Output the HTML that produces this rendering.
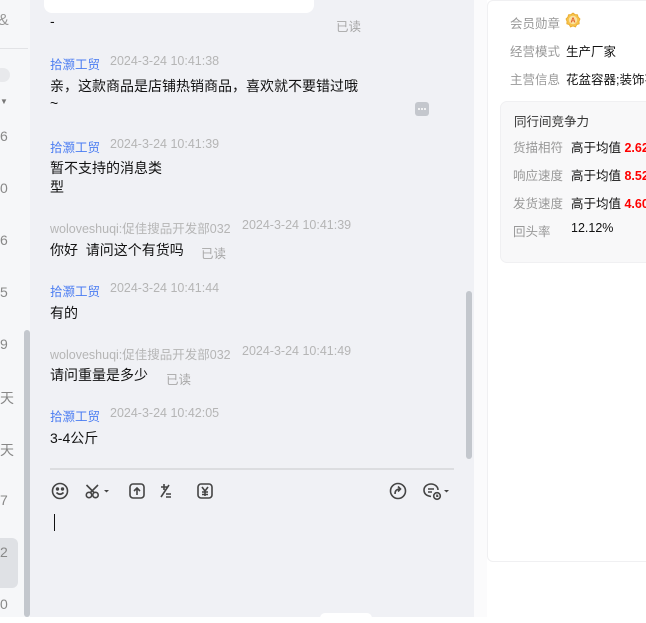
<!DOCTYPE html>
<html><head><meta charset="utf-8"><style>
*{margin:0;padding:0;box-sizing:border-box}
body{width:646px;height:617px;overflow:hidden;position:relative;background:#fff;font-family:"Liberation Sans","Noto Sans CJK SC",sans-serif;font-size:14px;color:#111}
.a{position:absolute;white-space:nowrap}
#left{position:absolute;left:0;top:0;width:30px;height:617px;background:#f6f7f9}
#chat{position:absolute;left:30px;top:0;width:444px;height:617px;background:#f0f1f5}
.n{color:#888;font-size:14px;left:0}
.nm{color:#4a7cf2;font-size:12.5px}
.tm{color:#b5b5b5;font-size:12.5px}
.gr{color:#a8a8a8;font-size:12.5px}
.lb{color:#999;font-size:12.5px}
.v{color:#111;font-size:12.5px}
.r{color:#f00;font-weight:bold;font-size:12.5px}
</style></head><body>
<div id="left">
 <div class="a" style="left:-2px;top:12px;color:#999;font-size:16px">&amp;</div>
 <div class="a" style="left:0;top:48px;width:28px;height:1px;background:#e2e3e6"></div>
 <div class="a" style="left:-6px;top:68px;width:16px;height:14px;border-radius:7px;background:#e8e9ec"></div>
 <div class="a" style="left:0;top:97px;color:#777;font-size:8px">▼</div>
 <div class="a n" style="top:128px">6</div>
 <div class="a n" style="top:180px">0</div>
 <div class="a n" style="top:232px">6</div>
 <div class="a n" style="top:284px">5</div>
 <div class="a n" style="top:336px">9</div>
 <div class="a n" style="top:388px">天</div>
 <div class="a n" style="top:440px">天</div>
 <div class="a n" style="top:492px">7</div>
 <div class="a" style="left:-6px;top:538px;width:24px;height:50px;border-radius:6px;background:#dfe1e5"></div>
 <div class="a n" style="top:544px">2</div>
 <div class="a n" style="top:596px">0</div>
 <div class="a" style="left:24px;top:330px;width:6px;height:287px;border-radius:3px;background:#c3c7cd"></div>
</div>
<div id="chat">
 <div class="a" style="left:14px;top:-8px;width:270px;height:21px;background:#fff;border-radius:0 0 8px 8px"></div>
 <div class="a" style="left:20px;top:13px">-</div>
 <div class="a gr" style="left:306px;top:16px">已读</div>

 <div class="a nm" style="left:20px;top:54px">拾灏工贸</div>
 <div class="a tm" style="left:80px;top:54px">2024-3-24 10:41:38</div>
 <div class="a" style="left:20px;top:76px">亲，这款商品是店铺热销商品，喜欢就不要错过哦</div>
 <div class="a" style="left:20px;top:95px">~</div>
 <div class="a" style="left:385px;top:102px;width:14px;height:14px;border-radius:3px;background:#c4c7cd"><svg width="14" height="14"><circle cx="4" cy="7" r="1" fill="#fff"/><circle cx="7" cy="7" r="1" fill="#fff"/><circle cx="10" cy="7" r="1" fill="#fff"/></svg></div>

 <div class="a nm" style="left:20px;top:137px">拾灏工贸</div>
 <div class="a tm" style="left:80px;top:137px">2024-3-24 10:41:39</div>
 <div class="a" style="left:20px;top:158px">暂不支持的消息类</div>
 <div class="a" style="left:20px;top:177px">型</div>

 <div class="a tm" style="left:20px;top:218px">woloveshuqi:促佳搜品开发部032</div>
 <div class="a tm" style="left:212px;top:218px">2024-3-24 10:41:39</div>
 <div class="a" style="left:20px;top:240px">你好&nbsp; 请问这个有货吗</div>
 <div class="a gr" style="left:171px;top:243px">已读</div>

 <div class="a nm" style="left:20px;top:281px">拾灏工贸</div>
 <div class="a tm" style="left:80px;top:281px">2024-3-24 10:41:44</div>
 <div class="a" style="left:20px;top:303px">有的</div>

 <div class="a tm" style="left:20px;top:344px">woloveshuqi:促佳搜品开发部032</div>
 <div class="a tm" style="left:212px;top:344px">2024-3-24 10:41:49</div>
 <div class="a" style="left:20px;top:365px">请问重量是多少</div>
 <div class="a gr" style="left:136px;top:369px">已读</div>

 <div class="a nm" style="left:20px;top:406px">拾灏工贸</div>
 <div class="a tm" style="left:80px;top:406px">2024-3-24 10:42:05</div>
 <div class="a" style="left:20px;top:428px">3-4公斤</div>

 <div class="a" style="left:436px;top:291px;width:6px;height:168px;border-radius:3px;background:#c3c7cd"></div>
 <div class="a" style="left:20px;top:468px;width:404px;height:2px;background:#dcdde0"></div>

 <svg class="a" style="left:20px;top:480px" width="400" height="22" viewBox="0 0 400 20" fill="none" stroke="#444" stroke-width="1.6">
  <circle cx="10" cy="10" r="7.5"/><circle cx="7.5" cy="8" r=".9" fill="#444"/><circle cx="12.5" cy="8" r=".9" fill="#444"/><path d="M6.5 11.5q3.5 3.5 7 0"/>
  <circle cx="39" cy="14" r="2.7"/><circle cx="45.5" cy="14" r="2.7"/><path d="M40 12l8-8M44.5 12l-8-8"/>
  <path d="M54 9l2.5 2.5 2.5-2.5z" fill="#444" stroke="none"/>
  <rect x="80" y="3" width="14" height="14" rx="3"/><path d="M87 14V7M84 10l3-3 3 3"/>
  <path d="M111 6h6M114 3v6M111 16l8-12M116 13h5M116 16h5"/>
  <rect x="148" y="3" width="14" height="14" rx="3"/><path d="M152 6l3 4 3-4M152 11h6M152 13.5h6M155 10v5"/>
  <circle cx="348" cy="10" r="7.5"/><path d="M345 13q0-5 5-5M348 5.5l2.5 2.5-2.5 2.5"/>
  <path d="M381 15.5q-7-1-7-6.5a7 6 0 0 1 14 0"/><path d="M378 8h6M378 11h4"/><circle cx="387" cy="15" r="3.3"/><path d="M387 13.5v1.7h1.3"/>
  <path d="M394 9l2.5 2.5 2.5-2.5z" fill="#444" stroke="none"/>
 </svg>
 <div class="a" style="left:24px;top:514px;width:1px;height:17px;background:#111"></div>
 <div class="a" style="left:290px;top:613px;width:52px;height:10px;border-radius:5px;background:#fff"></div>
</div>

<div class="a" style="left:474px;top:0;width:13px;height:617px;background:#fbfbfc"></div>
<div class="a" style="left:487px;top:0;width:170px;height:562px;background:#fff;border:1px solid #f0f0f2;border-radius:6px"></div>
<div class="a lb" style="left:510px;top:13px">会员勋章</div>
<svg class="a" style="left:565px;top:12px" width="16" height="16" viewBox="0 0 16 16"><path d="M8 1l2 1.5 2.5.3.7 2.4L15 7l-1 2.3.2 2.5-2.4.8L10.5 15 8 14l-2.5 1-1.3-2.4-2.4-.8.2-2.5L1 7l1.8-1.8.7-2.4L6 2.5z" fill="#f6c24a" stroke="#e9a92a" stroke-width=".8"/><circle cx="8" cy="8" r="4.2" fill="#fbe2a0"/><text x="8" y="10.5" font-size="7" font-weight="bold" fill="#e25a2a" text-anchor="middle" font-family="Liberation Sans">A</text></svg>
<div class="a lb" style="left:510px;top:41px">经营模式</div>
<div class="a v" style="left:566px;top:41px">生产厂家</div>
<div class="a lb" style="left:510px;top:69px">主营信息</div>
<div class="a v" style="left:566px;top:69px">花盆容器;装饰花</div>
<div class="a" style="left:500px;top:101px;width:160px;height:162px;background:#f8f8f9;border:1px solid #f0f0f2;border-radius:7px"></div>
<div class="a v" style="left:514px;top:111px;color:#333">同行间竞争力</div>
<div class="a lb" style="left:513px;top:137px">货描相符</div>
<div class="a v" style="left:571px;top:137px">高于均值 <span class="r">2.62</span></div>
<div class="a lb" style="left:513px;top:165px">响应速度</div>
<div class="a v" style="left:571px;top:165px">高于均值 <span class="r">8.52</span></div>
<div class="a lb" style="left:513px;top:193px">发货速度</div>
<div class="a v" style="left:571px;top:193px">高于均值 <span class="r">4.60</span></div>
<div class="a lb" style="left:513px;top:221px">回头率</div>
<div class="a v" style="left:571px;top:221px">12.12%</div>
</body></html>
